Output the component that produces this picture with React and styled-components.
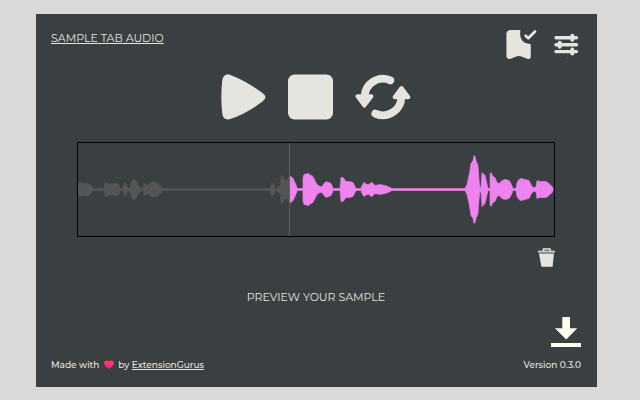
import styled, { createGlobalStyle } from "styled-components"

const GlobalStyle = createGlobalStyle`
*{
    box-sizing: border-box;
}

body{
    margin: 0;
    background: #d9d9d9;
    font-family: Montserrat, Inter, "Liberation Sans", sans-serif;
}
`

const Page = styled.div`
padding: 14px 43px 13px 36px;
`

const Popup = styled.main`
display: flex;
flex-direction: column;
padding: 14px 16px 15px 15px;
background: #3a3f41;
color: #e6e4df;
`

const Header = styled.header`
display: flex;
justify-content: space-between;
align-items: flex-start;

h1{
    margin: 0;
    font-size: 11px;
    font-weight: 400;
    line-height: 20px;
    text-decoration: underline;
    text-underline-offset: 1px;
}

.menu{
    display: flex;
    gap: 15px;
}
`

const IconButton = styled.button`
display: block;
padding: 0;
border: none;
background: none;
color: ${({ $color }) => $color || "#e6e4df"};
cursor: pointer;

svg{
    display: block;
}
`

const Controls = styled.div`
display: flex;
justify-content: center;
gap: 22px;
margin-top: 14px;
`

const Editor = styled.section`
margin: 22px 26px 0;
`

const WaveBox = styled.div`
border: 1px solid #000;

svg{
    display: block;
    width: 100%;
    height: 93px;
}
`

const EditorTools = styled.div`
display: flex;
justify-content: flex-end;
margin-top: 11px;
`

const Message = styled.p`
margin: 21px 0 0;
font-size: 11px;
line-height: 18px;
text-align: center;
`

const Actions = styled.div`
display: flex;
justify-content: flex-end;
margin-top: 11px;
`

const Footer = styled.footer`
display: flex;
justify-content: space-between;
margin-top: 11px;
font-size: 9px;
font-weight: 500;
line-height: 14px;

p{
    margin: 0;
}

a{
    color: inherit;
    text-underline-offset: 1px;
}

svg{
    margin: 0 2px;
    vertical-align: -1px;
}
`

// [position, amplitude] pairs
const samples = [
    [0, 6], [2, 7], [4, 6], [10, 6], [13, 4], [15, 1], [21, 1], [22, 2], [24, 1], [26, 1],
    [27, 7], [30, 6], [32, 5], [34, 6], [39, 6], [41, 5], [42, 1], [45, 1],
    [46, 5], [47, 7], [49, 4], [50, 1], [52, 2], [54, 9], [56, 10], [58, 9], [60, 5], [62, 2],
    [65, 1], [66, 6], [69, 4], [72, 6], [75, 8], [77, 7], [79, 7], [81, 4], [83, 4], [84, 1],
    [191, 1], [193, 4], [194, 7], [196, 5], [197, 1], [199, 1], [200, 3], [202, 3],
    [203, 14], [205, 13], [207, 9], [209, 9], [211, 13], [213, 13], [215, 11],
    [217, 7], [219, 2], [220, 1], [225, 1], [225, 12], [226, 15], [231, 16], [232, 14], [234, 14],
    [236, 11], [239, 5], [242, 3], [244, 3], [246, 6], [248, 8], [251, 7], [253, 6],
    [254, 4], [255, 1], [262, 1], [263, 12], [265, 12], [268, 8], [272, 8],
    [275, 7], [276, 5], [278, 1], [283, 1], [284, 4], [286, 7], [289, 5], [291, 5],
    [293, 7], [294, 7], [297, 4], [302, 5], [307, 4], [310, 3], [314, 1], [387, 1], [389, 5],
    [391, 14], [393, 26], [395, 29], [396, 34], [397, 33], [398, 29], [400, 24], [401, 10],
    [402, 1], [403, 3], [404, 17], [407, 14], [408, 10], [410, 1], [412, 1], [412, 15], [413, 17],
    [415, 13], [417, 12], [419, 7], [421, 6], [424, 9], [427, 10], [431, 9], [433, 6],
    [435, 1], [438, 1], [439, 7], [441, 10], [443, 11], [451, 9], [453, 5], [455, 2],
    [457, 2], [458, 3], [459, 9], [462, 8], [468, 8], [471, 6], [474, 3], [475, 1],
]

const MIDDLE = 46.5
const CURSOR = 211

const wavePoints = [
    ...samples.map(([x, a]) => `${x},${MIDDLE - a}`),
    ...[...samples].reverse().map(([x, a]) => `${x},${MIDDLE + a}`),
].join(" ")

function Waveform() {
    return <WaveBox>
        <svg viewBox="0 0 476 93" preserveAspectRatio="none" role="img" aria-label="Waveform">
            <defs>
                <clipPath id="played">
                    <rect x="0" y="0" width={CURSOR} height="93" />
                </clipPath>
                <clipPath id="remaining">
                    <rect x={CURSOR + 1} y="0" width={475 - CURSOR} height="93" />
                </clipPath>
            </defs>
            <g clipPath="url(#played)">
                <polygon points={wavePoints} fill="#555" stroke="#555" strokeWidth="0.6" strokeLinejoin="round" />
            </g>
            <g clipPath="url(#remaining)">
                <polygon points={wavePoints} fill="#ee82ee" stroke="#ee82ee" strokeWidth="0.6" strokeLinejoin="round" />
            </g>
            <rect x={CURSOR} y="0" width="1" height="93" fill="#5d5f60" />
        </svg>
    </WaveBox>
}

function SavedIcon() {
    return <svg width="32" height="32" viewBox="0 0 32 32" fill="none">
        <path d="M4.5 2H13.2Q14.8 2 14.3 4C13.2 10.4 17.3 15.8 23.2 15.8Q24.8 15.8 24.8 17V29.2Q24.6 31.3 21.8 30.9L14.6 28.3Q12.8 27.6 11 28.3L4 30.9Q.7 31.4 .4 28.5V6Q.5 2.2 4.5 2Z" fill="currentColor" />
        <path d="M19.7 7.7L22.3 10.2L29 3.6" stroke="currentColor" strokeWidth="2.8" strokeLinecap="round" strokeLinejoin="round" />
    </svg>
}

function SettingsIcon() {
    return <svg width="28" height="32" viewBox="0 0 28 32" stroke="currentColor" strokeWidth="3.4" strokeLinecap="round">
        <path d="M3 9.8H23.5M3 16.8H23.5M3 23.6H23.5" />
        <path d="M19.3 7.8V11.8M6.7 14.8V18.8M19.3 21.6V25.6" strokeWidth="4" />
        <path d="M13.7 30V30.2" strokeWidth="1" opacity=".4" />
    </svg>
}

function PlayIcon() {
    return <svg width="45" height="46" viewBox="0 0 45 46" fill="currentColor">
        <path d="M1.2 7C2 1.6 4.6 -.4 9.5 1C21 5.2 31.5 11.6 41.5 19Q47.5 23.2 41.5 27.6C31.5 35 21 41 9.5 45C4.6 46.4 2 44.4 1.2 39Q-.6 23 1.2 7Z" />
    </svg>
}

function StopIcon() {
    return <svg width="45" height="46" viewBox="0 0 45 46" fill="currentColor">
        <rect y="0.5" width="45" height="45" rx="6.5" />
    </svg>
}

function LoopIcon() {
    return <svg width="56" height="46" viewBox="0 0 56 46" fill="currentColor" stroke="currentColor" strokeLinecap="round" strokeLinejoin="round">
        <path d="M35.3 6.4A18.3 18.3 0 0 0 9.6 23.2" fill="none" strokeWidth="7.8" />
        <path d="M2.5 22.2H16.4L9.4 31.6Z" strokeWidth="4" />
        <path d="M20.3 39.6A18.3 18.3 0 0 0 46.2 22" fill="none" strokeWidth="7.8" />
        <path d="M39.6 23.2H53.4L46.5 14Z" strokeWidth="4" />
    </svg>
}

function TrashIcon() {
    return <svg width="17" height="19" viewBox="0 0 17 19" fill="currentColor">
        <path d="M5.5 3V1H12V3" fill="none" stroke="currentColor" strokeWidth="1.6" />
        <rect y="2.6" width="17" height="2" opacity=".85" />
        <path d="M1 5.6H16L14.6 18.8H3.4Z" />
    </svg>
}

function DownloadIcon() {
    return <svg width="30" height="30" viewBox="0 0 30 30" fill="currentColor">
        <path d="M11.3 0H19V11.2H26.3L15.2 22.5L4 11.2H11.3Z" />
        <rect y="26" width="30" height="4" />
    </svg>
}

function HeartIcon() {
    return <svg width="10" height="9" viewBox="0 0 10 9" role="img" aria-label="love">
        <defs>
            <linearGradient id="heart" x1="0" y1="0" x2="0" y2="1">
                <stop offset="0" stopColor="#ff4a55" />
                <stop offset="1" stopColor="#f8159b" />
            </linearGradient>
        </defs>
        <path d="M5 1.5C6.2 -.4 10 .1 9.9 3.2C9.8 5.7 7 7.7 5 9C3 7.7 .2 5.7 .1 3.2C0 .1 3.8 -.4 5 1.5Z" fill="url(#heart)" />
    </svg>
}


function App() {
    return <Page>
        <GlobalStyle />
        <Popup>
            <Header>
                <h1>SAMPLE TAB AUDIO</h1>
                <div className="menu">
                    <IconButton aria-label="Saved samples"><SavedIcon /></IconButton>
                    <IconButton aria-label="Settings"><SettingsIcon /></IconButton>
                </div>
            </Header>

            <Controls>
                <IconButton aria-label="Play"><PlayIcon /></IconButton>
                <IconButton aria-label="Stop"><StopIcon /></IconButton>
                <IconButton aria-label="Loop"><LoopIcon /></IconButton>
            </Controls>

            <Editor>
                <Waveform />
                <EditorTools>
                    <IconButton aria-label="Delete"><TrashIcon /></IconButton>
                </EditorTools>
            </Editor>

            <Message>PREVIEW YOUR SAMPLE</Message>

            <Actions>
                <IconButton aria-label="Download" $color="#fffff0"><DownloadIcon /></IconButton>
            </Actions>

            <Footer>
                <p>Made with <HeartIcon /> by <a href="#gurus">ExtensionGurus</a></p>
                <p>Version 0.3.0</p>
            </Footer>
        </Popup>
    </Page>
}

export default App
